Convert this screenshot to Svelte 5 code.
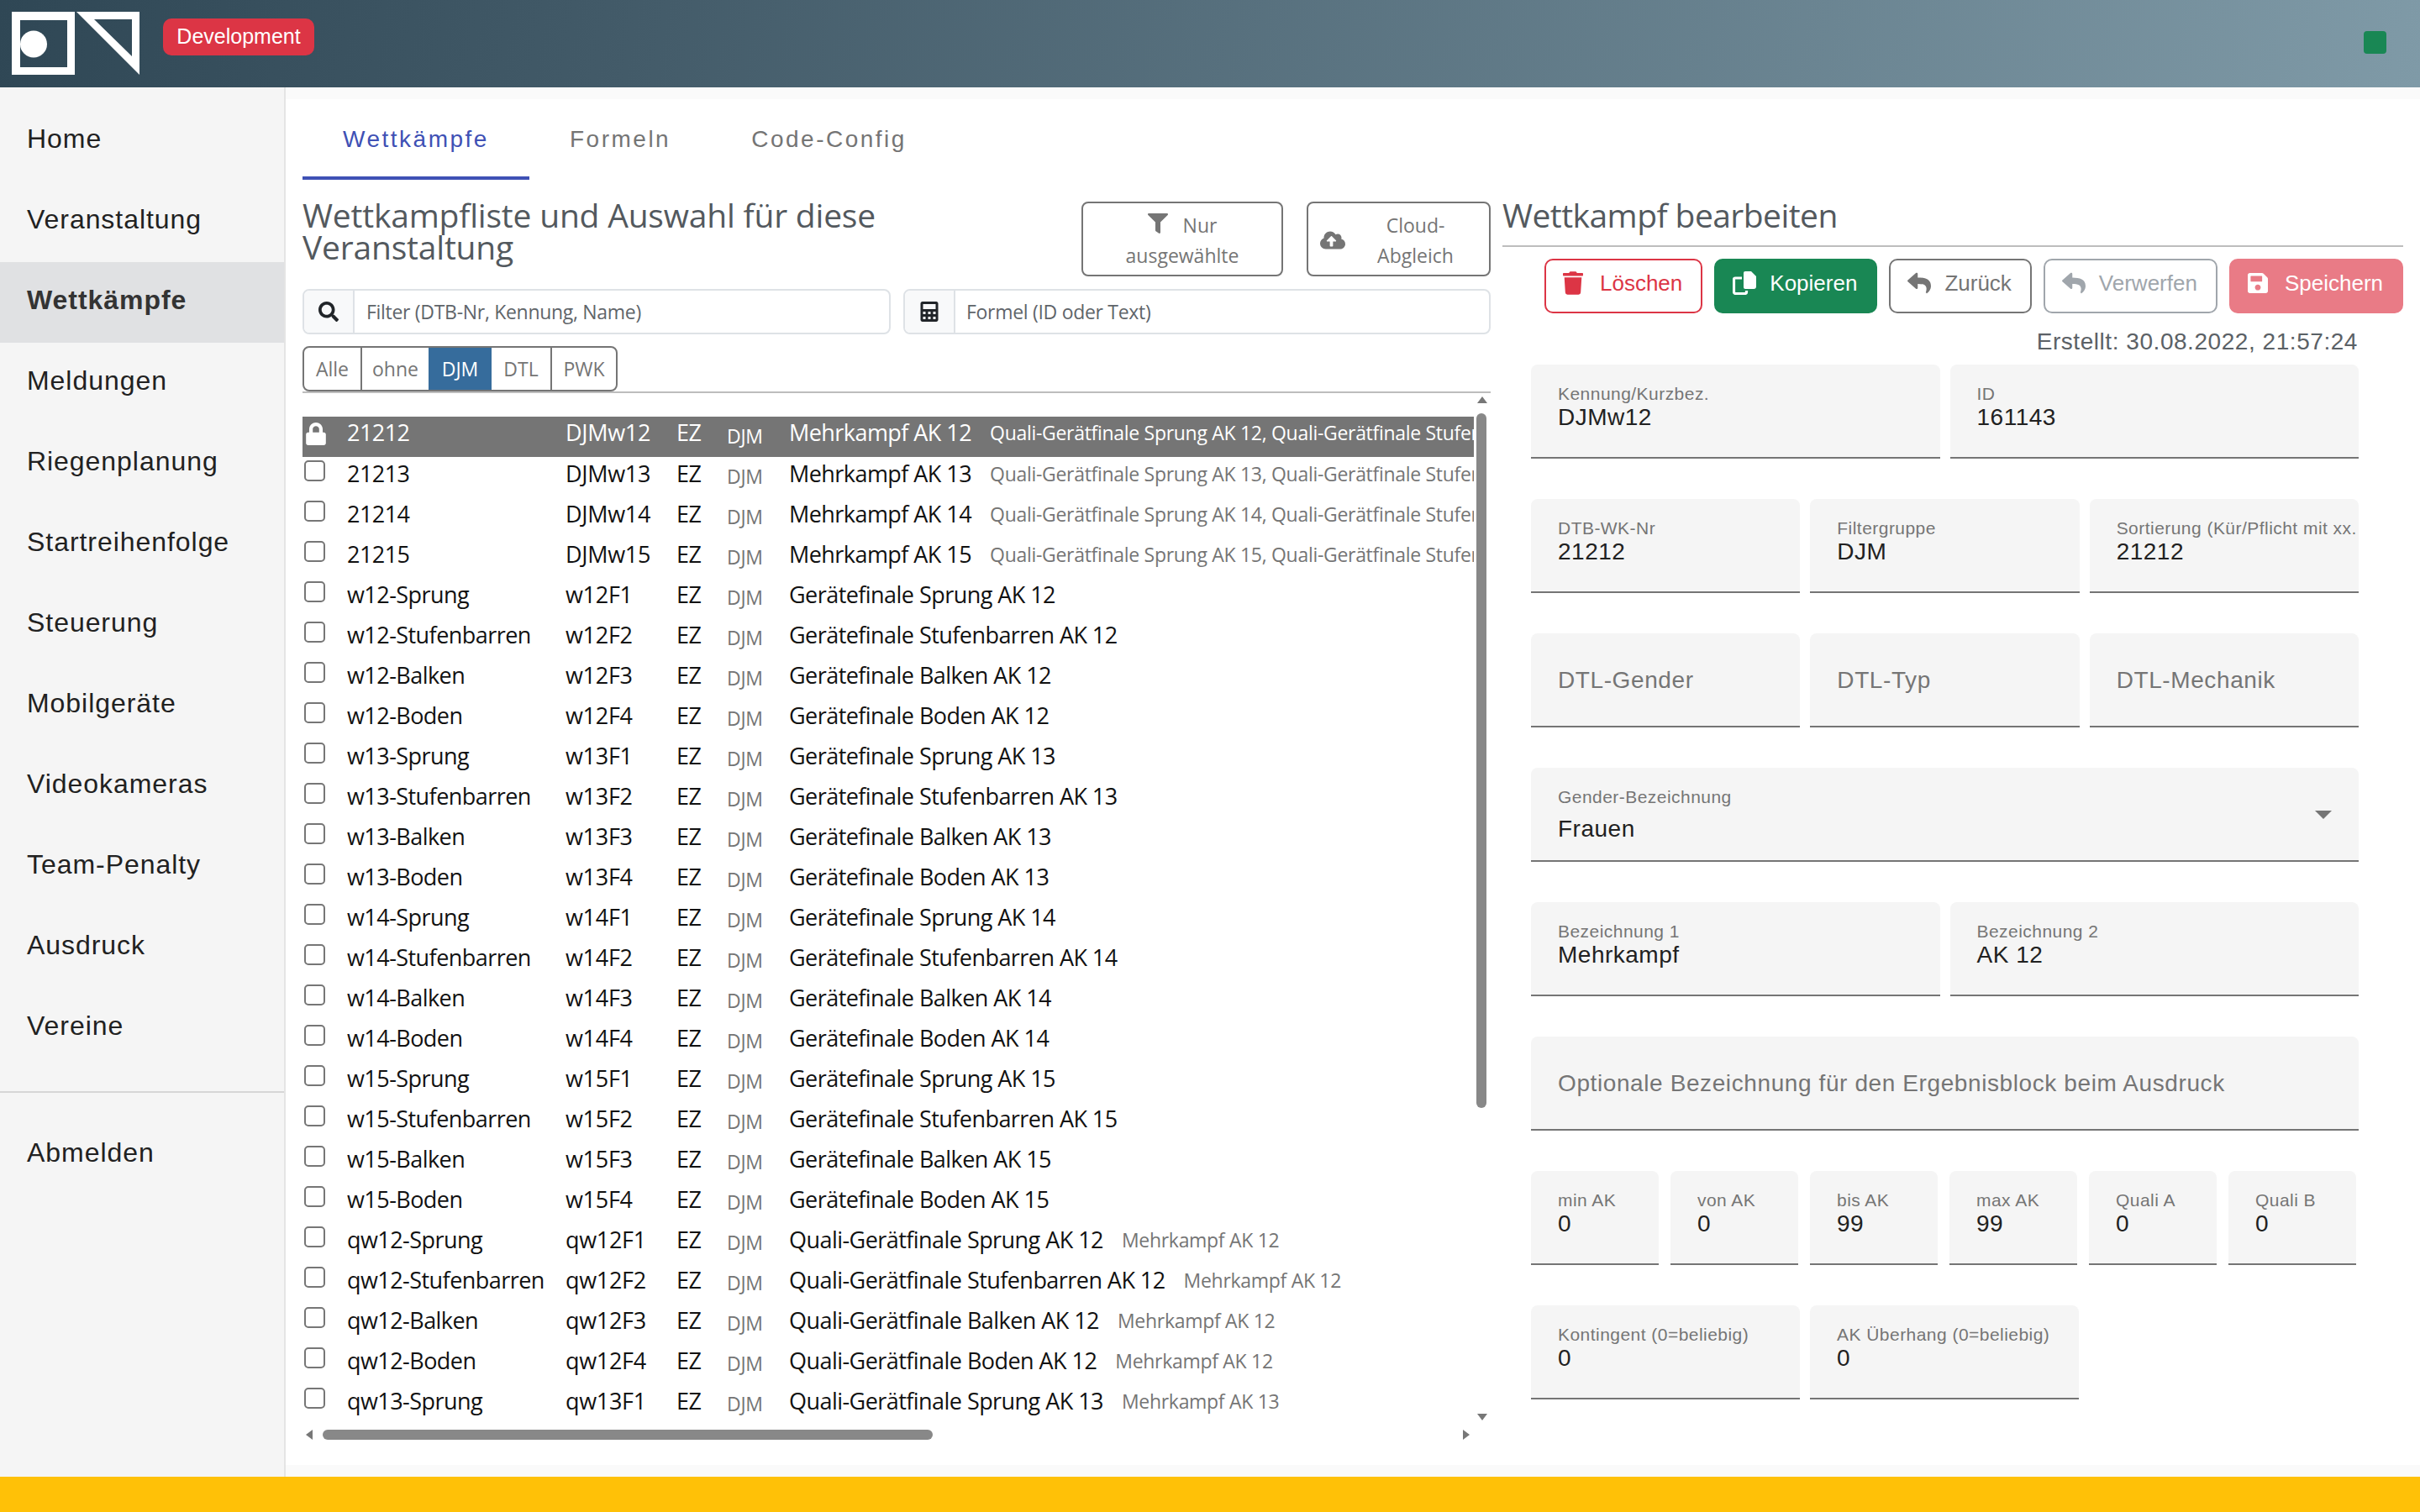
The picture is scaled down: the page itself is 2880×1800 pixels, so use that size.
<script>
  const nav = ['Home','Veranstaltung','Wettkämpfe','Meldungen','Riegenplanung','Startreihenfolge','Steuerung','Mobilgeräte','Videokameras','Team-Penalty','Ausdruck','Vereine'];
  const kinds = [['Sprung','Sprung'],['Stufenbarren','Stufenbarren'],['Balken','Balken'],['Boden','Boden']];
  const rows = [];
  [12,13,14,15].forEach((ak,i)=>{
    rows.push({id:String(21212+i),code:'DJMw'+ak,name:'Mehrkampf AK '+ak,extra:`Quali-Gerätfinale Sprung AK ${ak}, Quali-Gerätfinale Stufenbarren AK ${ak}, Quali-Gerätfinale Balken AK ${ak}`,sel:i===0});
  });
  [12,13,14,15].forEach(ak=>{
    kinds.forEach((k,i)=>rows.push({id:`w${ak}-${k[0]}`,code:`w${ak}F${i+1}`,name:`Gerätefinale ${k[1]} AK ${ak}`,extra:''}));
  });
  kinds.forEach((k,i)=>rows.push({id:`qw12-${k[0]}`,code:`qw12F${i+1}`,name:`Quali-Gerätfinale ${k[1]} AK 12`,extra:'Mehrkampf AK 12'}));
  rows.push({id:'qw13-Sprung',code:'qw13F1',name:'Quali-Gerätfinale Sprung AK 13',extra:'Mehrkampf AK 13'});
  const groups = ['Alle','ohne','DJM','DTL','PWK'];
  const reply = "M8.309 189.836L184.313 37.851C199.719 24.546 224 35.347 224 56.015v80.053c160.629 1.839 288 34.032 288 186.258 0 61.441-39.581 122.309-83.333 154.132-13.653 9.931-33.111-2.533-28.077-18.631 45.344-145.012-21.507-183.51-176.59-185.742V360c0 20.7-24.3 31.453-39.687 18.164l-176.004-152c-11.071-9.562-11.086-26.753 0-36.328z";
  const ages = [['min AK','0'],['von AK','0'],['bis AK','99'],['max AK','99'],['Quali A','0'],['Quali B','0']];
</script>

<div class="page">
  <header class="top">
    <svg class="logo" viewBox="0 0 152 75" aria-label="Logo">
      <path fill-rule="evenodd" fill="#fff" d="M0 0H75V75H0ZM10 10V66H66V10Z"/>
      <circle cx="26" cy="38.500" r="16" fill="#fff"/>
      <path fill-rule="evenodd" fill="#fff" d="M77 0H152V75ZM98 9L143 53V9Z"/>
    </svg>
    <span class="badge">Development</span>
    <span class="status"></span>
  </header>

  <div class="body">
    <nav class="side">
      <ul>
        {#each nav as n}
          <li class:active={n==='Wettkämpfe'}>{n}</li>
        {/each}
      </ul>
      <hr />
      <ul><li>Abmelden</li></ul>
    </nav>

    <main class="main">
      <div class="panel">
        <div class="tabs">
          <div class="tab on">Wettkämpfe</div>
          <div class="tab">Formeln</div>
          <div class="tab">Code-Config</div>
        </div>
        <div class="cols">
          <section class="left">
            <div class="titlerow">
              <h2>Wettkampfliste und Auswahl für diese Veranstaltung</h2>
              <div class="actions">
                <button class="tall nur">
                  <span class="l1"><svg class="ic-filter" viewBox="0 0 512 512"><path fill="currentColor" d="M487.976 0H24.028C2.71 0-8.047 25.866 7.058 40.971L192 225.941V432c0 7.831 3.821 15.17 10.237 19.662l80 55.98C298.02 518.69 320 507.493 320 487.98V225.941l184.947-184.97C520.021 25.896 509.338 0 487.976 0z"/></svg>Nur</span>
                  <span>ausgewählte</span>
                </button>
                <button class="tall cloud">
                  <svg class="ic-cloud" viewBox="0 0 640 512"><path fill="currentColor" d="M537.6 226.6c4.1-10.7 6.4-22.4 6.4-34.6 0-53-43-96-96-96-19.7 0-38.1 6-53.3 16.2C367 64.2 315.3 32 256 32c-88.4 0-160 71.6-160 160 0 2.7.1 5.4.2 8.1C40.2 219.8 0 273.2 0 336c0 79.5 64.5 144 144 144h368c70.7 0 128-57.3 128-128 0-61.9-44-113.6-102.4-125.4zM393.4 288H328v112c0 8.8-7.2 16-16 16h-48c-8.8 0-16-7.2-16-16V288h-65.4c-14.3 0-21.4-17.2-11.3-27.3l105.4-105.4c6.2-6.2 16.4-6.2 22.6 0l105.4 105.4c10.1 10.1 3 27.3-11.3 27.3z"/></svg>
                  <span class="cloudtxt">Cloud-<br />Abgleich</span>
                </button>
              </div>
            </div>
            <div class="filters">
              <div class="igroup one">
                <span class="addon"><svg viewBox="0 0 512 512"><path fill="#212529" d="M505 442.7L405.3 343c-4.5-4.5-10.6-7-17-7H372c27.6-35.3 44-79.7 44-128C416 93.1 322.9 0 208 0S0 93.1 0 208s93.1 208 208 208c48.3 0 92.700-16.400 128-44v16.300c0 6.400 2.500 12.500 7 17l99.700 99.700c9.400 9.400 24.600 9.400 33.900 0l28.300-28.300c9.400-9.400 9.400-24.600.1-34zM208 336c-70.700 0-128-57.200-128-128 0-70.700 57.200-128 128-128 70.700 0 128 57.200 128 128 0 70.700-57.200 128-128 128z"/></svg></span>
                <span class="ph">Filter (DTB-Nr, Kennung, Name)</span>
              </div>
              <div class="igroup two">
                <span class="addon"><svg viewBox="0 0 448 512"><path fill="#212529" fill-rule="evenodd" d="M48 0H400C426 0 448 22 448 48V464C448 490 426 512 400 512H48C22 512 0 490 0 464V48C0 22 22 0 48 0ZM64 64V192H384V64ZM64 256V320H128V256ZM192 256V320H256V256ZM320 256V320H384V256ZM64 384V448H128V384ZM192 384V448H256V384ZM320 384V448H384V384Z"/></svg></span>
                <span class="ph">Formel (ID oder Text)</span>
              </div>
            </div>
            <div class="groupbar">
              <div class="bgroup">
                {#each groups as g}
                  <span class="seg seg-{g.toLowerCase()}" class:on={g==='DJM'}>{g}</span>
                {/each}
              </div>
            </div>
            <div class="listwrap">
              <div class="list">
                {#each rows as r}
                  <div class="row" class:sel={r.sel}>
                    <span class="c0">
                      {#if r.sel}
                        <svg class="lock" viewBox="0 0 448 512"><path fill="#fff" d="M400 224h-24v-72C376 68.200 307.800 0 224 0S72 68.200 72 152v72H48c-26.500 0-48 21.500-48 48v192c0 26.500 21.500 48 48 48h352c26.500 0 48-21.500 48-48V272c0-26.500-21.500-48-48-48zm-104 0H152v-72c0-39.700 32.300-72 72-72s72 32.300 72 72v72z"/></svg>
                      {:else}
                        <span class="check"></span>
                      {/if}
                    </span>
                    <span class="c1">{r.id}</span>
                    <span class="c2">{r.code}</span>
                    <span class="c3">EZ</span>
                    <span class="c4">DJM</span>
                    <span class="c5">{r.name}</span>
                    <span class="c6">{r.extra}</span>
                  </div>
                {/each}
              </div>
              <i class="arrow up"></i>
              <i class="arrow down"></i>
              <i class="arrow lft"></i>
              <i class="arrow rgt"></i>
              <i class="thumb v"></i>
              <i class="thumb h"></i>
            </div>
          </section>

          <section class="right">
            <h2 class="rt">Wettkampf bearbeiten</h2>
            <div class="btns">
              <button class="b del"><svg class="i n" viewBox="0 0 448 512"><path fill="currentColor" d="M432 32H312l-9.400-18.700A24 24 0 0 0 281.100 0H166.800a23.720 23.720 0 0 0-21.400 13.300L136 32H16A16 16 0 0 0 0 48v32a16 16 0 0 0 16 16h416a16 16 0 0 0 16-16V48a16 16 0 0 0-16-16zM53.200 467a48 48 0 0 0 47.900 45h245.800a48 48 0 0 0 47.900-45L416 128H32z"/></svg>Löschen</button>
              <button class="b cop"><svg class="i" viewBox="0 0 28 28"><path fill="#fff" d="M13 2a2 2 0 0 1 2-2h7l6 6v12a3 3 0 0 1-3 3H15a2 2 0 0 1-2-2z"/><path fill="none" stroke="#fff" stroke-width="3.200" d="M11 8H3a1.500 1.500 0 0 0-1.500 1.500v15A2 2 0 0 0 3.500 26.500h11A2 2 0 0 0 16.500 24.500V23"/></svg>Kopieren</button>
              <button class="b back"><svg class="i" viewBox="0 0 512 512"><path fill="currentColor" d={reply}/></svg>Zurück</button>
              <button class="b undo"><svg class="i" viewBox="0 0 512 512"><path fill="currentColor" d={reply}/></svg>Verwerfen</button>
              <button class="b save"><svg class="i n" viewBox="0 0 448 512"><path fill="currentColor" d="M433.941 129.941l-83.882-83.882A48 48 0 0 0 316.118 32H48C21.490 32 0 53.490 0 80v352c0 26.510 21.490 48 48 48h352c26.510 0 48-21.490 48-48V163.882a48 48 0 0 0-14.059-33.941zM224 416c-35.346 0-64-28.654-64-64 0-35.346 28.654-64 64-64s64 28.654 64 64c0 35.346-28.654 64-64 64zm96-304.520V212c0 6.627-5.373 12-12 12H76c-6.627 0-12-5.373-12-12V108c0-6.627 5.373-12 12-12h228.520c3.183 0 6.235 1.264 8.485 3.515l3.480 3.480A11.996 11.996 0 0 1 320 111.480z"/></svg>Speichern</button>
            </div>
            <div class="created">Erstellt: 30.08.2022, 21:57:24</div>
            <div class="form">
              <div class="frow">
                <div class="f"><label>Kennung/Kurzbez.</label><b>DJMw12</b></div>
                <div class="f"><label>ID</label><b>161143</b></div>
              </div>
              <div class="frow">
                <div class="f"><label>DTB-WK-Nr</label><b>21212</b></div>
                <div class="f"><label>Filtergruppe</label><b>DJM</b></div>
                <div class="f"><label>Sortierung (Kür/Pflicht mit xx.</label><b>21212</b></div>
              </div>
              <div class="frow">
                <div class="f empty">DTL-Gender</div>
                <div class="f empty">DTL-Typ</div>
                <div class="f empty">DTL-Mechanik</div>
              </div>
              <div class="frow">
                <div class="f select"><label>Gender-Bezeichnung</label><b>Frauen</b><i class="caret"></i></div>
              </div>
              <div class="frow">
                <div class="f"><label>Bezeichnung 1</label><b>Mehrkampf</b></div>
                <div class="f"><label>Bezeichnung 2</label><b>AK 12</b></div>
              </div>
              <div class="frow">
                <div class="f empty">Optionale Bezeichnung für den Ergebnisblock beim Ausdruck</div>
              </div>
              <div class="frow six">
                {#each ages as a}
                  <div class="f"><label>{a[0]}</label><b>{a[1]}</b></div>
                {/each}
              </div>
              <div class="frow duo">
                <div class="f"><label>Kontingent (0=beliebig)</label><b>0</b></div>
                <div class="f"><label>AK Überhang (0=beliebig)</label><b>0</b></div>
              </div>
            </div>
          </section>
        </div>
      </div>
    </main>
  </div>
  <footer class="foot"></footer>
</div>

<style>
  :global(body) { margin: 0; background: #fafafa; }
  .page { width: 2880px; height: 1800px; display: flex; flex-direction: column; overflow: hidden; font-family: "Liberation Sans", Arial, sans-serif; color: #212121; }
  .top { height: 104px; flex: none; display: flex; align-items: flex-start; position: relative; background: linear-gradient(100deg, #2f4755 0%, #425a68 25%, #7f9aa7 100%); }
  .logo { width: 152px; height: 75px; margin: 14px 0 0 14px; }
  .badge { margin: 22px 0 0 28px; height: 44px; width: 180px; box-sizing: border-box; background: #dc3545; color: #fff; border-radius: 10px; font-size: 25px; display: flex; align-items: center; justify-content: center; padding-bottom: 2px; }
  .status { position: absolute; left: 2813px; top: 37px; width: 27px; height: 27px; background: #198754; border-radius: 4px; }
  .body { flex: 1; display: flex; min-height: 0; }
  .side { width: 338px; flex: none; background: #f5f5f5; border-right: 2px solid #e4e4e4; padding-top: 16px; box-sizing: content-box; }
  .side ul { list-style: none; margin: 0; padding: 0; }
  .side li { height: 96px; box-sizing: border-box; display: flex; align-items: center; padding: 0 0 5px 32px; font-size: 32px; letter-spacing: 0.95px; color: #212121; }
  .side li.active { background: #e0e1e3; font-weight: 700; color: #333; }
  .side hr { border: 0; height: 2px; background: #d6d6d6; margin: 27px 0 26px; }
  .main { flex: 1; padding: 14px 0; min-width: 0; background: #fafafa; }
  .panel { height: 100%; background: #fff; padding-left: 20px; box-sizing: border-box; }
  .tabs { display: flex; height: 96px; }
  .tab { padding: 0 48px; display: flex; align-items: center; font-size: 28px; letter-spacing: 2.5px; color: #757575; box-sizing: border-box; }
  .tab.on { color: #3f51b5; border-bottom: 4px solid #3f51b5; padding: 4px 0 0; width: 270px; justify-content: center; }
  .cols { display: flex; gap: 14px; }
  .left { width: 1414px; flex: none; }
  .titlerow { display: flex; align-items: flex-start; padding-top: 23px; height: 107px; box-sizing: content-box; }
  h2 { margin: 0; font-weight: 400; font-size: 39px; line-height: 38px; color: #53595e; font-family: "Open Sans", sans-serif; letter-spacing: -0.2px; }
  .titlerow h2 { width: 800px; }
  .actions { margin-left: auto; display: flex; gap: 28px; padding-top: 3px; }
  button { font-family: inherit; background: #fff; }
  .tall { height: 89px; border: 2px solid #757575; border-radius: 8px; color: #757575; font-size: 23px; line-height: 36px; padding: 2px 0 0; box-sizing: border-box; font-family: "Open Sans", sans-serif; }
  .nur { width: 240px; display: flex; flex-direction: column; align-items: center; justify-content: center; }
  .l1 { display: flex; align-items: center; gap: 18px; }
  .ic-filter { width: 24px; height: 24px; margin-top: -4px; }
  .cloud { width: 219px; display: flex; align-items: center; padding-left: 14px; }
  .ic-cloud { width: 30px; height: 24px; flex: none; }
  .cloudtxt { flex: 1; text-align: center; margin-right: 4px; }
  .filters { display: flex; justify-content: space-between; }
  .igroup { height: 54px; border: 2px solid #dee2e6; border-radius: 8px; display: flex; box-sizing: border-box; align-items: stretch; }
  .igroup.one { width: 700px; }
  .igroup.two { width: 699px; }
  .addon { width: 58px; background: #f8f9fa; border-right: 2px solid #dee2e6; display: flex; align-items: center; justify-content: center; border-radius: 6px 0 0 6px; }
  .addon svg { width: 24px; height: 24px; }
  .ph { display: flex; align-items: center; padding-left: 14px; font-size: 23px; color: #5f656a; font-family: "Open Sans", sans-serif; letter-spacing: -0.3px; }
  .two .ph { padding-left: 13px; }
  .groupbar { margin-top: 14px; border-bottom: 2px solid #bdbdbd; height: 54px; }
  .bgroup { display: inline-flex; height: 54px; border: 2px solid #757575; border-radius: 8px; box-sizing: border-box; overflow: hidden; }
  .seg { display: flex; align-items: center; justify-content: center; font-size: 23px; color: #757575; border-left: 2px solid #757575; box-sizing: border-box; font-family: "Open Sans", sans-serif; }
  .seg-alle { width: 67px; border-left: 0; }
  .seg-ohne { width: 81px; }
  .seg-djm { width: 75px; background: #366c9c; color: #fff; border-left: 0; }
  .seg-dtl { width: 70px; border-left: 0; }
  .seg-pwk { width: 78px; }
  .listwrap { position: relative; height: 1252px; }
  .list { position: absolute; left: 0; top: 28px; width: 1394px; height: 1200px; overflow: hidden; }
  .row { display: flex; height: 48px; font-size: 27px; white-space: nowrap; color: #111; line-height: 40px; font-family: "Open Sans", sans-serif; letter-spacing: -0.55px; }
  .row.sel { background: #757575; color: #fff; line-height: 38px; }
  .c0 { width: 53px; flex: none; position: relative; }
  .check { position: absolute; left: 2px; top: 4px; width: 25px; height: 25px; border: 2px solid #767676; border-radius: 5px; box-sizing: border-box; background: #fff; }
  .lock { position: absolute; left: 4px; top: 7px; width: 24px; height: 27px; }
  .c1 { width: 260px; flex: none; }
  .c2 { width: 132px; flex: none; letter-spacing: -0.3px; }
  .c3 { width: 60px; flex: none; }
  .c4 { width: 74px; flex: none; font-size: 23px; color: #757575; position: relative; top: 3px; letter-spacing: -0.3px; }
  .sel .c4, .sel .c6 { color: #fff; }
  .sel .c4 { top: 4px; }
  .c5 { flex: none; }
  .c6 { margin-left: 22px; font-size: 23px; color: #757575; letter-spacing: -0.3px; }
  .thumb, .arrow { position: absolute; display: block; }
  .thumb { background: #888; }
  .thumb.v { left: 1397px; top: 24px; width: 12px; height: 827px; border-radius: 6px; }
  .thumb.h { left: 24px; top: 1234px; width: 726px; height: 12px; border-radius: 6px; }
  .arrow { width: 0; height: 0; border: 6px solid transparent; }
  .arrow.up { left: 1398px; top: 4px; border-bottom: 8px solid #777; border-top: 0; }
  .arrow.down { left: 1398px; top: 1215px; border-top: 8px solid #777; border-bottom: 0; }
  .arrow.lft { left: 4px; top: 1234px; border-right: 8px solid #777; border-left: 0; }
  .arrow.rgt { left: 1381px; top: 1234px; border-left: 8px solid #777; border-right: 0; }
  .right { width: 1072px; flex: none; }
  .rt { height: 38px; padding: 23px 0 17px; border-bottom: 2px solid #bdbdbd; box-sizing: content-box; letter-spacing: -0.55px; }
  .btns { display: flex; justify-content: flex-end; gap: 14px; margin-top: 14px; }
  .b { height: 65px; border: 2px solid; border-radius: 10px; font-size: 26px; display: flex; align-items: center; gap: 16px; padding: 0 22px 7px 20px; box-sizing: border-box; }
  .i { width: 28px; height: 28px; flex: none; }
  .i.n { width: 24px; margin-right: 4px; }
  .del { color: #dc3545; border-color: #dc3545; }
  .cop { background: #198754; border-color: #198754; color: #fff; }
  .back { color: #757575; border-color: #757575; }
  .undo { color: #a0a6ac; border-color: #a0a6ac; }
  .save { background: #e97b86; border-color: #e97b86; color: #fff; }
  .created { text-align: right; padding-right: 54px; font-size: 28px; line-height: 34px; margin-top: 17px; color: #5b6166; letter-spacing: 0.55px; }
  .form { padding-left: 34px; width: 985px; margin-top: 10px; }
  .frow { display: flex; gap: 12px; margin-bottom: 48px; }
  .f { flex: 1 1 0; min-width: 0; height: 112px; background: #f5f5f5; border-bottom: 2px solid #757575; border-radius: 8px 8px 0 0; box-sizing: border-box; padding: 21px 0 0 32px; overflow: hidden; position: relative; }
  .f label { display: block; font-size: 21px; line-height: 28px; color: #757575; white-space: nowrap; letter-spacing: 0.46px; }
  .f b { display: block; font-weight: 400; font-size: 28px; line-height: 28px; color: #212121; letter-spacing: 0.5px; }
  .f.empty { display: flex; align-items: center; padding-top: 2px; font-size: 28px; color: #757575; letter-spacing: 0.6px; }
  .select b { margin-top: 10px; }
  .caret { position: absolute; right: 32px; top: 51px; width: 0; height: 0; border: 10px solid transparent; border-top: 10px solid #757575; border-bottom: 0; }
  .six { gap: 14px; }
  .six .f { flex: 0 0 152px; }
  .duo .f { flex: 0 0 320px; }
  .foot { height: 42px; flex: none; background: #ffc107; }
</style>
